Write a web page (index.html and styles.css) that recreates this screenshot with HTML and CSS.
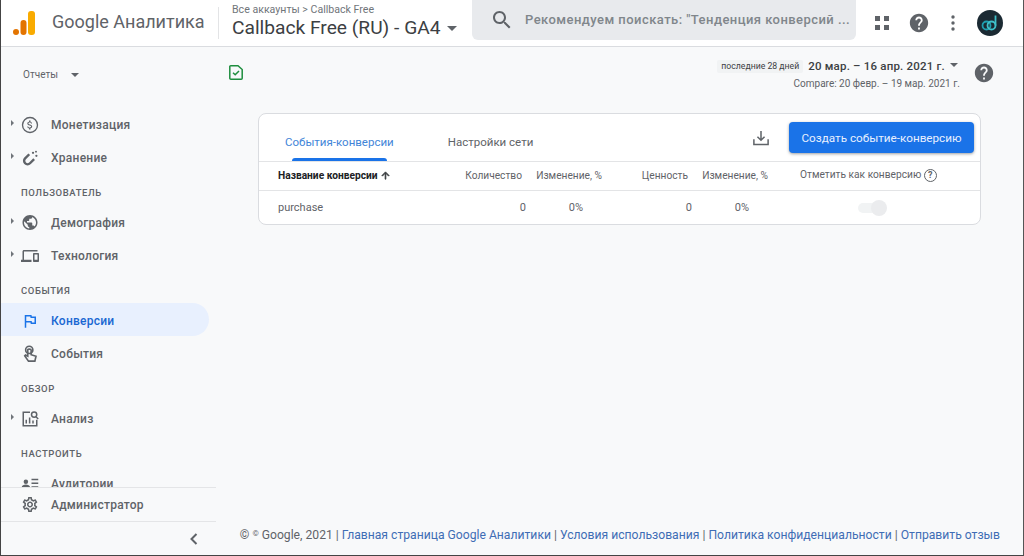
FILE: index.html
```html
<!DOCTYPE html>
<html lang="en">
<head>
  <meta charset="UTF-8">
  <title>Google Analytics</title>
  <link rel="stylesheet" href="styles.css">
</head>
<body>
  <!-- Top bar -->
  <header class="topbar">
    <div class="brand">
      <svg class="logo" viewBox="0 0 22 24" width="22" height="24">
        <rect x="15" y="0" width="7" height="24" rx="3" fill="#f9ab00"/>
        <rect x="7.5" y="9" width="6" height="15" rx="3" fill="#e37400"/>
        <circle cx="3" cy="21" r="3" fill="#e37400"/>
      </svg>
      <span class="brand-name">Google Аналитика</span>
    </div>
    <div class="account">
      <div class="crumbs">Все аккаунты &gt; Callback Free</div>
      <div class="property">Callback Free (RU) - GA4 <span class="caret"></span></div>
    </div>
    <div class="search">
      <svg viewBox="0 0 24 24" width="24" height="24"><path fill="#5f6368" d="M15.5 14h-.79l-.28-.27C15.41 12.59 16 11.11 16 9.5 16 5.91 13.09 3 9.5 3S3 5.91 3 9.5 5.91 16 9.5 16c1.61 0 3.09-.59 4.23-1.57l.27.28v.79l5 4.99L20.49 19l-4.99-5zm-6 0C7.01 14 5 11.99 5 9.5S7.01 5 9.5 5 14 7.01 14 9.5 11.99 14 9.5 14z"/></svg>
      <span class="search-text">Рекомендуем поискать: "Тенденция конверсий ...</span>
    </div>
    <div class="top-icons">
      <svg viewBox="0 0 16 16" width="16" height="16"><path fill="#5f6368" d="M1 1h5v5H1zM10 1h5v5h-5zM1 10h5v5H1zM10 10h5v5h-5z"/></svg>
      <svg viewBox="0 0 24 24" width="22" height="22"><path fill="#5f6368" d="M12 2C6.48 2 2 6.48 2 12s4.48 10 10 10 10-4.48 10-10S17.52 2 12 2zm1 17h-2v-2h2v2zm2.07-7.75l-.9.92C13.45 12.9 13 13.5 13 15h-2v-.5c0-1.1.45-2.1 1.17-2.83l1.24-1.26c.37-.36.59-.86.59-1.41 0-1.1-.9-2-2-2s-2 .9-2 2H8c0-2.21 1.79-4 4-4s4 1.79 4 4c0 .88-.36 1.68-.93 2.25z"/></svg>
      <svg class="dots" viewBox="0 0 6 16" width="6" height="16"><g fill="#5f6368"><circle cx="3" cy="2" r="1.7"/><circle cx="3" cy="8" r="1.7"/><circle cx="3" cy="14" r="1.7"/></g></svg>
      <svg class="avatar" viewBox="0 0 26 26" width="26" height="26">
        <circle cx="13" cy="13" r="13" fill="#1b2a33"/>
        <g fill="none" stroke-width="1.8">
          <circle cx="9.500" cy="15.500" r="4" stroke="#1f9fb0"/>
          <circle cx="14.500" cy="15.500" r="4" stroke="#3fc1c9"/>
          <path d="M18.500 15.500V5.500" stroke="#3fc1c9"/>
        </g>
      </svg>
    </div>
  </header>

  <div class="body-row">
    <!-- Sidebar -->
    <aside class="sidebar">
      <div class="reports">Отчеты <span class="caret small"></span></div>
      <nav class="nav">
        <a class="item"><span class="arrow"></span>
          <svg viewBox="0 0 24 24" width="18" height="18"><circle cx="12" cy="12" r="10" fill="none" stroke="#5f6368" stroke-width="1.8"/><path fill="#5f6368" transform="translate(4.2 4.2) scale(.65)" d="M11.8 10.9c-2.27-.59-3-1.2-3-2.15 0-1.09 1.01-1.85 2.7-1.85 1.78 0 2.44.85 2.5 2.1h2.21c-.07-1.72-1.12-3.3-3.21-3.81V3h-3v2.16c-1.94.42-3.5 1.68-3.5 3.61 0 2.31 1.91 3.46 4.7 4.13 2.5.6 3 1.48 3 2.41 0 .69-.49 1.79-2.7 1.79-2.06 0-2.87-.92-2.98-2.1h-2.2c.12 2.19 1.76 3.42 3.7 3.83V21h3v-2.15c1.95-.37 3.5-1.5 3.5-3.55 0-2.84-2.43-3.81-4.7-4.4z"/></svg>
          Монетизация</a>
        <a class="item"><span class="arrow"></span>
          <svg viewBox="0 0 24 24" width="18" height="18"><path fill="none" stroke="#5f6368" stroke-width="3.200" d="M11 7l-5.500 5.500a4.500 4.500 0 0 0 6.500 6.500l5.500-5.500"/><circle cx="16" cy="5" r="1.500" fill="#5f6368"/><circle cx="20" cy="3.500" r="1.300" fill="#5f6368"/><circle cx="20.500" cy="9" r="1.500" fill="#5f6368"/></svg>
          Хранение</a>
        <div class="section">ПОЛЬЗОВАТЕЛЬ</div>
        <a class="item"><span class="arrow"></span>
          <svg viewBox="0 0 24 24" width="19" height="19"><path fill="#5f6368" d="M12 2C6.48 2 2 6.48 2 12s4.48 10 10 10 10-4.48 10-10S17.52 2 12 2zm-1 17.93c-3.95-.49-7-3.85-7-7.93 0-.62.08-1.21.21-1.79L9 15v1c0 1.1.9 2 2 2v1.93zm6.9-2.54c-.26-.81-1-1.39-1.9-1.39h-1v-3c0-.55-.45-1-1-1H8v-2h2c.55 0 1-.45 1-1V7h2c1.1 0 2-.9 2-2v-.41c2.93 1.19 5 4.06 5 7.41 0 2.08-.8 3.97-2.1 5.39z"/></svg>
          Демография</a>
        <a class="item"><span class="arrow"></span>
          <svg viewBox="0 0 24 24" width="18" height="18"><path fill="#5f6368" d="M4 6h18V4H4c-1.1 0-2 .9-2 2v11H0v3h14v-3H4V6zm19 2h-6c-.55 0-1 .45-1 1v10c0 .55.45 1 1 1h6c.55 0 1-.45 1-1V9c0-.55-.45-1-1-1zm-1 9h-4v-7h4v7z"/></svg>
          Технология</a>
        <div class="section">СОБЫТИЯ</div>
        <a class="item active">
          <svg viewBox="0 0 24 24" width="18" height="18"><path fill="#1a73e8" d="M12.36 6l.4 2H18v6h-3.36l-.4-2H7V6h5.36M14 4H5v17h2v-7h5.6l.4 2h7V6h-5.6L14 4z"/></svg>
          Конверсии</a>
        <a class="item">
          <svg viewBox="0 0 24 24" width="18" height="18"><g fill="none" stroke="#5f6368" stroke-width="2.200"><circle cx="11" cy="6.500" r="4.800"/><path d="M9 6.500v8.500l-3-1.500-1 1 5 7h8.500l1.500-6.500-6.500-2V6.500c0-1.600-4.500-1.600-4.500 0z"/></g></svg>
          События</a>
        <div class="section">ОБЗОР</div>
        <a class="item"><span class="arrow"></span>
          <svg viewBox="0 0 24 24" width="18" height="18"><g fill="none" stroke="#5f6368" stroke-width="2"><path d="M12 3H3v18h18v-8"/><circle cx="17.500" cy="6" r="3.500"/><path d="M20 9l3 3"/></g><path fill="#5f6368" d="M6 13h2v5H6zM10.500 10h2v8h-2zM15 14h2v4h-2z"/></svg>
          Анализ</a>
        <div class="section">НАСТРОИТЬ</div>
        <a class="item">
          <svg viewBox="0 0 24 24" width="18" height="18"><g fill="#5f6368"><circle cx="6.500" cy="9" r="3"/><path d="M1 16c0-2 3-3.500 5.500-3.500S12 14 12 16v1H1zM14 5h9v2h-9zM14 10h9v2h-9zM14 15h9v2h-9z"/></g></svg>
          Аудитории</a>
      </nav>
      <a class="item admin">
        <svg viewBox="0 0 24 24" width="19" height="19"><path fill="#5f6368" d="M19.43 12.98c.04-.32.07-.64.07-.98 0-.34-.03-.66-.07-.98l2.11-1.65c.19-.15.24-.42.12-.64l-2-3.46c-.09-.16-.26-.25-.44-.25-.06 0-.12.01-.17.03l-2.49 1c-.52-.4-1.08-.73-1.69-.98l-.38-2.65C14.46 2.18 14.25 2 14 2h-4c-.25 0-.46.18-.49.42l-.38 2.65c-.61.25-1.17.59-1.69.98l-2.49-1c-.06-.02-.12-.03-.18-.03-.17 0-.34.09-.43.25l-2 3.46c-.13.22-.07.49.12.64l2.11 1.65c-.04.32-.07.65-.07.98 0 .33.03.66.07.98l-2.11 1.65c-.19.15-.24.42-.12.64l2 3.46c.09.16.26.25.44.25.06 0 .12-.01.17-.03l2.49-1c.52.4 1.08.73 1.69.98l.38 2.65c.03.24.24.42.49.42h4c.25 0 .46-.18.49-.42l.38-2.65c.61-.25 1.17-.59 1.69-.98l2.49 1c.06.02.12.03.18.03.17 0 .34-.09.43-.25l2-3.46c.12-.22.07-.49-.12-.64l-2.11-1.65zm-1.98-1.71c.04.31.05.52.05.73 0 .21-.02.43-.05.73l-.14 1.13.89.7 1.08.84-.7 1.21-1.27-.51-1.04-.42-.9.68c-.43.32-.84.56-1.25.73l-1.06.43-.16 1.13-.2 1.35h-1.4l-.19-1.35-.16-1.13-1.06-.43c-.43-.18-.83-.41-1.23-.71l-.91-.7-1.06.43-1.27.51-.7-1.21 1.08-.84.89-.7-.14-1.13c-.03-.31-.05-.54-.05-.74s.02-.43.05-.73l.14-1.13-.89-.7-1.08-.84.7-1.21 1.27.51 1.04.42.9-.68c.43-.32.84-.56 1.25-.73l1.06-.43.16-1.13.2-1.35h1.39l.19 1.35.16 1.13 1.06.43c.43.18.83.41 1.23.71l.91.7 1.06-.43 1.27-.51.7 1.21-1.07.85-.89.7.14 1.13zM12 8c-2.21 0-4 1.79-4 4s1.790 4 4 4 4-1.790 4-4-1.790-4-4-4zm0 6c-1.100 0-2-.9-2-2s.9-2 2-2 2 .9 2 2-.9 2-2 2z"/></svg>
        Администратор</a>
      <div class="collapse">
        <svg viewBox="0 0 10 14" width="10" height="14"><path fill="none" stroke="#5f6368" stroke-width="2" d="M7.500 2L2.500 7l5 5"/></svg>
      </div>
    </aside>

    <!-- Main area -->
    <main class="main">
      <div class="main-top">
        <svg class="saved" viewBox="0 0 14 15" width="14" height="15"><path fill="none" stroke="#1e8e3e" stroke-width="1.500" d="M2 .8h7l4.200 3.700v8.700a1 1 0 0 1-1 1H2a1 1 0 0 1-1.200-1V2a1 1 0 0 1 1.200-1.200z"/><path fill="none" stroke="#1e8e3e" stroke-width="1.500" d="M4 7.800l2.200 2 3.800-3.800"/></svg>
        <div class="dates">
          <div class="date-main"><span class="date-chip">последние 28 дней</span><span class="date-range">20 мар. – 16 апр. 2021 г.</span><span class="caret small"></span></div>
          <div class="date-compare">Compare: 20 февр. – 19 мар. 2021 г.</div>
        </div>
        <svg class="date-help" viewBox="0 0 24 24" width="22" height="22"><path fill="#5f6368" d="M12 2C6.48 2 2 6.48 2 12s4.48 10 10 10 10-4.48 10-10S17.52 2 12 2zm1 17h-2v-2h2v2zm2.070-7.750l-.9.920C13.450 12.900 13 13.500 13 15h-2v-.5c0-1.100.450-2.100 1.170-2.830l1.240-1.260c.370-.360.590-.860.590-1.410 0-1.100-.9-2-2-2s-2 .9-2 2H8c0-2.210 1.790-4 4-4s4 1.790 4 4c0 .880-.360 1.680-.930 2.250z"/></svg>
      </div>

      <section class="card">
        <div class="card-head">
          <div class="tab selected">События-конверсии</div>
          <div class="tab">Настройки сети</div>
          <svg class="download" viewBox="0 0 18 18" width="16" height="16"><path fill="none" stroke="#5f6368" stroke-width="1.700" d="M1 10.500v5.700h16v-5.700M9 1v10M5 7.500l4 4 4-4"/></svg>
          <button class="create">Создать событие-конверсию</button>
        </div>
        <div class="row row-head">
          <div class="c-name">Название конверсии
            <svg class="sort" viewBox="0 0 24 24" width="11" height="11"><path fill="#3c4043" stroke="#3c4043" stroke-width="1.500" d="M4 12l1.410 1.410L11 7.830V20h2V7.830l5.580 5.590L20 12l-8-8-8 8z"/></svg>
          </div>
          <div class="c-num">Количество</div>
          <div class="c-chg">Изменение, %</div>
          <div class="c-num">Ценность</div>
          <div class="c-chg">Изменение, %</div>
          <div class="c-mark">Отметить как конверсию <span class="q">?</span></div>
        </div>
        <div class="row row-data">
          <div class="c-name">purchase</div>
          <div class="c-num">0</div>
          <div class="c-chg">0%</div>
          <div class="c-num">0</div>
          <div class="c-chg">0%</div>
          <div class="c-mark"><span class="toggle"><span class="knob"></span></span></div>
        </div>
      </section>

      <footer class="footer">© <span class="copy-small">©</span> Google, 2021 | <a>Главная страница Google Аналитики</a> | <a>Условия использования</a> | <a>Политика конфиденциальности</a> | <a>Отправить отзыв</a></footer>
    </main>
  </div>
</body>
</html>
```

FILE: styles.css
```css
* {
  box-sizing: border-box;
}

html, body {
  height: 100%;
}

body {
  margin: 0;
  height: 556px;
  overflow: hidden;
  display: flex;
  flex-direction: column;
  background: #f8f9fa;
  border-left: 1px solid #444;
  border-right: 1px solid #555;
  border-bottom: 1px solid #444;
  font-family: Roboto, "Liberation Sans", sans-serif;
  color: #5f6368;
}

/* Top bar */
.topbar {
  flex: none;
  height: 47px;
  display: flex;
  align-items: center;
  background: #fff;
  border-bottom: 1px solid #dadce0;
}

.brand {
  width: 218px;
  height: 32px;
  display: flex;
  align-items: center;
  padding-left: 12px;
  border-right: 1px solid #e3e4e6;
}

.brand-name {
  margin: -3px 0 0 17px;
  font-size: 18px;
  color: #5f6368;
  white-space: nowrap;
}

.account {
  width: 253px;
  padding-left: 13px;
  margin-top: -3px;
}

.crumbs {
  font-size: 10.600px;
  line-height: 12px;
  color: #70757a;
}

.property {
  font-size: 19.200px;
  line-height: 24px;
  color: #3c4043;
  white-space: nowrap;
}

.caret {
  display: inline-block;
  vertical-align: middle;
  margin-left: 2px;
  border-left: 5px solid transparent;
  border-right: 5px solid transparent;
  border-top: 5px solid #5f6368;
}

.caret.small {
  border-left-width: 4px;
  border-right-width: 4px;
  border-top-width: 4px;
}

.search {
  width: 384px;
  height: 40px;
  margin-top: -7px;
  display: flex;
  align-items: center;
  padding-left: 18px;
  gap: 11px;
  background: #e8eaed;
  border-radius: 0 0 6px 6px;
}

.search-text {
  font-size: 13px;
  font-weight: 500;
  letter-spacing: .45px;
  color: #80868b;
  white-space: nowrap;
}

.top-icons {
  display: flex;
  align-items: center;
  margin-left: 18px;
  gap: 18px;
}

.dots {
  margin-left: 2px;
}

.avatar {
  margin-left: 3px;
}

/* Layout under the bar */
.body-row {
  flex: 1;
  min-height: 0;
  display: flex;
}

/* Sidebar */
.sidebar {
  width: 215px;
  flex: none;
  display: flex;
  flex-direction: column;
}

.reports {
  flex: none;
  height: 60px;
  padding: 21px 0 0 22px;
  font-size: 10px;
  line-height: 14px;
  color: #5f6368;
}

.reports .caret {
  margin-left: 11px;
}

.nav {
  flex: 1;
  min-height: 0;
  overflow: hidden;
}

.item {
  position: relative;
  height: 33px;
  display: flex;
  align-items: center;
  gap: 11px;
  padding: 2px 0 0 19px;
  font-size: 12px;
  font-weight: 500;
  letter-spacing: .25px;
  color: #5f6368;
  white-space: nowrap;
}

.item svg {
  flex: none;
  width: 18px;
  margin: 0 1px;
}

.item.active {
  width: 208px;
  background: #e8f0fe;
  border-radius: 0 17px 17px 0;
  color: #1967d2;
}

.arrow {
  position: absolute;
  left: 10px;
  top: 13px;
  border-top: 3.500px solid transparent;
  border-bottom: 3.500px solid transparent;
  border-left: 3.500px solid #70757a;
}

.section {
  height: 32px;
  padding: 14px 0 0 20px;
  font-size: 9.500px;
  line-height: 12px;
  font-weight: 500;
  letter-spacing: .6px;
  color: #5f6368;
}

.admin {
  flex: none;
  border-top: 1px solid #e4e5e7;
  height: 34px;
  padding-top: 0;
}

.collapse {
  flex: none;
  height: 34px;
  border-top: 1px solid #e4e5e7;
  display: flex;
  align-items: center;
  justify-content: flex-end;
  padding-right: 17px;
}

/* Main */
.main {
  flex: 1;
  min-width: 0;
  display: flex;
  flex-direction: column;
  padding: 0 42px;
}

.main-top {
  flex: none;
  height: 66px;
  display: flex;
  align-items: flex-start;
  padding-top: 16px;
}

.saved {
  margin: 2px 0 0 -29px;
}

.dates {
  margin-left: auto;
  margin-top: -8px;
  text-align: right;
}

.date-main {
  display: flex;
  align-items: center;
  justify-content: flex-end;
  height: 22px;
}

.date-chip {
  padding: 2px 4px;
  font-size: 8.700px;
  line-height: 9px;
  color: #3c4043;
  background: #f1f3f4;
  border-radius: 2px;
}

.date-range {
  margin: 0 5px 0 5px;
  font-size: 11.500px;
  font-weight: 500;
  letter-spacing: .2px;
  color: #3c4043;
}

.date-main .caret {
  margin: 0 2px 3px 0;
}

.date-compare {
  font-size: 10px;
  line-height: 13px;
  color: #5f6368;
}

.date-help {
  margin: -1px -14px 0 13px;
}

.card {
  flex: none;
  height: 112px;
  background: #fff;
  border: 1px solid #dadce0;
  border-radius: 8px;
}

.card-head {
  height: 48px;
  display: flex;
  align-items: stretch;
  border-bottom: 1px solid #e3e4e6;
}

.tab {
  position: relative;
  padding: 21px 0 0 0;
  font-size: 11.500px;
  line-height: 14px;
  color: #5f6368;
  white-space: nowrap;
}

.tab.selected {
  margin-left: 26px;
  margin-right: 54px;
  color: #4285d8;
}

.tab.selected::after {
  content: "";
  position: absolute;
  left: 7px;
  right: 7px;
  bottom: 0;
  height: 3px;
  background: #1a73e8;
  border-radius: 3px 3px 0 0;
}

.download {
  margin: 16px 20px 0 auto;
}

.create {
  align-self: flex-start;
  width: 185px;
  height: 31px;
  margin: 8px 6px 0 0;
  padding: 0;
  border: none;
  border-radius: 4px;
  background: #1a73e8;
  color: #e8f0fe;
  font-family: inherit;
  font-size: 11.700px;
  box-shadow: 0 1px 3px rgba(60, 64, 67, .5);
}

.row {
  display: grid;
  grid-template-columns: 169px 79px 79px 87px 79px 1fr;
  align-items: center;
  padding-left: 19px;
  font-size: 10.200px;
}

.row-head {
  height: 29px;
  padding-bottom: 1px;
  border-bottom: 1px solid #e3e4e6;
}

.row-data {
  height: 33px;
  font-size: 11px;
}

.c-name {
  white-space: nowrap;
}

.row-head .c-name {
  font-weight: 700;
  color: #202124;
}

.sort {
  vertical-align: -2px;
}

.c-num {
  text-align: right;
}

.row-head .c-num {
  padding-right: 4px;
}

.c-chg {
  text-align: right;
  padding-right: 22px;
}

.row-head .c-chg {
  padding-right: 3px;
  white-space: nowrap;
}

.c-mark {
  padding-left: 29px;
  white-space: nowrap;
}

.q {
  display: inline-block;
  width: 13px;
  height: 13px;
  line-height: 11px;
  border: 1px solid #5f6368;
  border-radius: 50%;
  text-align: center;
  font-size: 9px;
  font-weight: 700;
}

.toggle {
  display: inline-block;
  position: relative;
  width: 28px;
  height: 10px;
  margin-left: 58px;
  vertical-align: middle;
  background: #f1f3f4;
  border-radius: 5px;
}

.knob {
  position: absolute;
  right: -1px;
  top: -3px;
  width: 16px;
  height: 16px;
  background: #ebecee;
  border-radius: 50%;
}

.footer {
  margin: auto -19px 12px -40px;
  text-align: right;
  font-size: 12.170px;
  line-height: 16px;
  color: #5f6368;
  white-space: nowrap;
}

.copy-small {
  font-size: 8px;
  vertical-align: 3px;
}

.footer a {
  color: #3f6db5;
}
```
